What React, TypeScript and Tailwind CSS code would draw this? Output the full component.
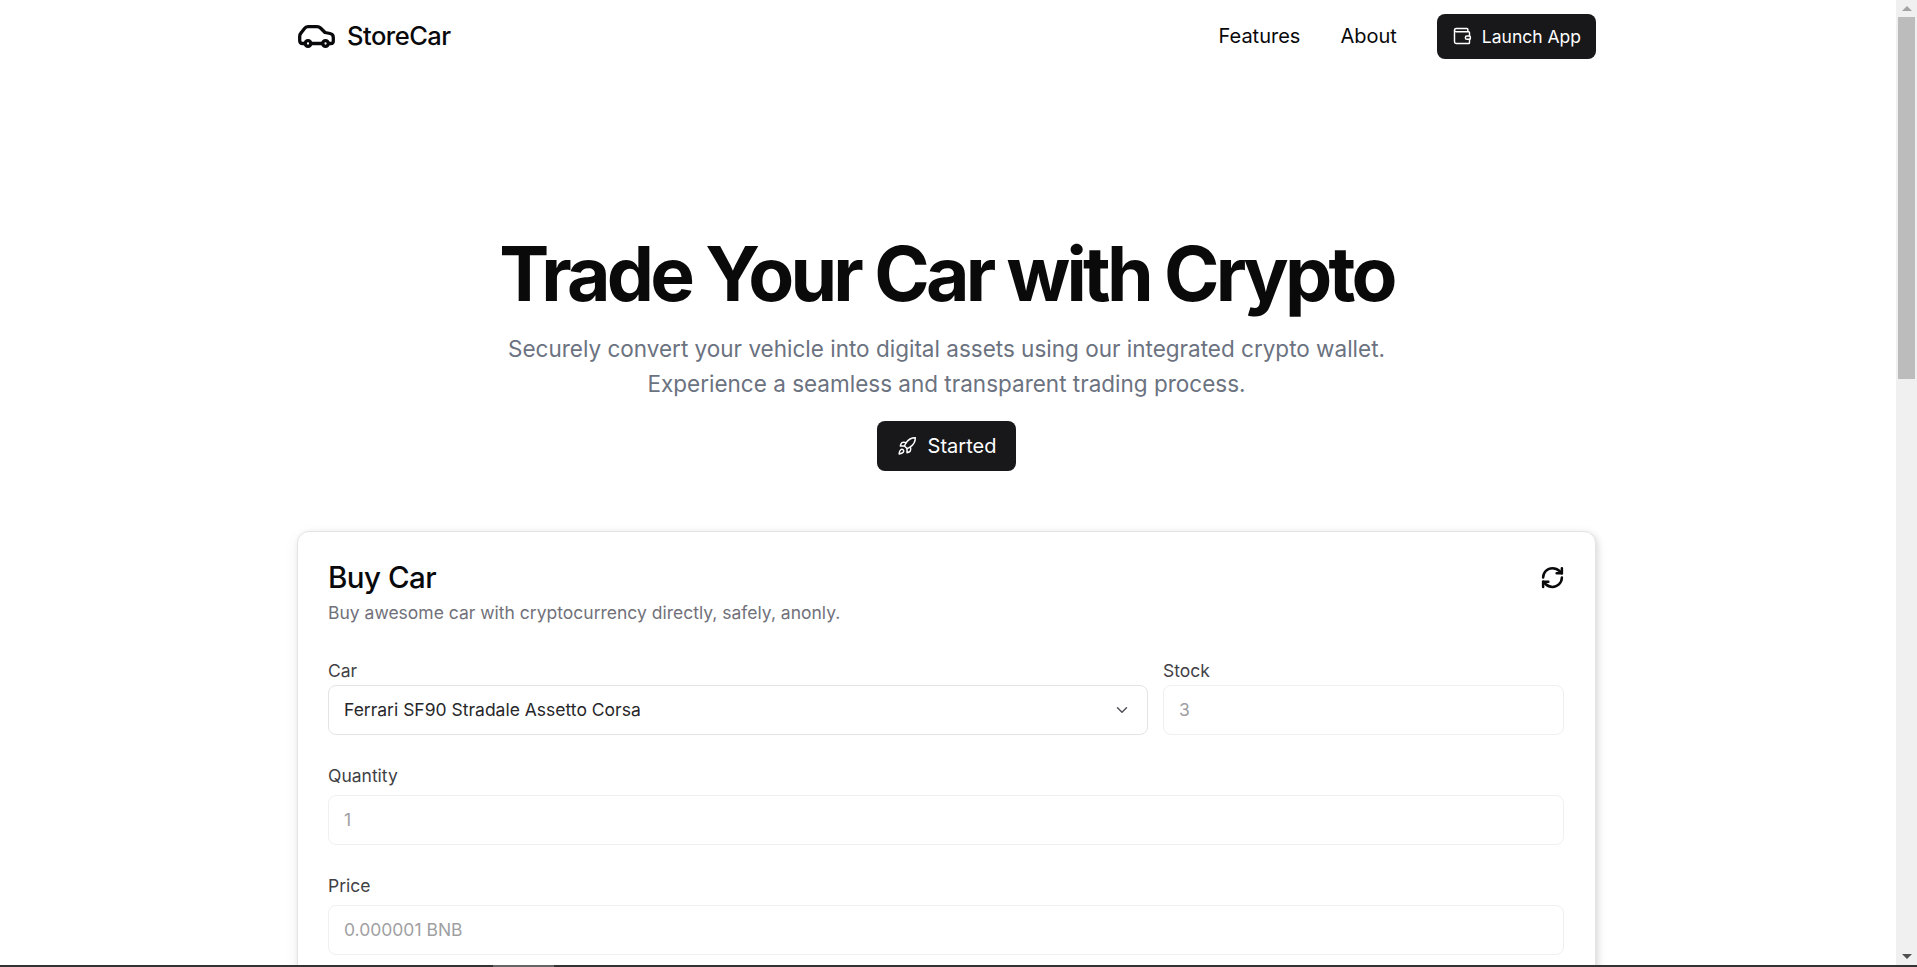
import { ChevronDown, RefreshCw, Rocket, Wallet } from 'lucide-react';

function CarLogo() {
  return (
    <svg width="37" height="23" viewBox="0 0 37 23" fill="none" stroke="currentColor" strokeWidth="3.3" strokeLinecap="round" strokeLinejoin="round" className="ml-[1px]">
      <path d="M6.500 18.500H4.500C2.800 18.500 1.700 17.500 1.700 15.500V11.500C1.700 10 2 9 3 8L6.500 3.500C7.500 2 8.500 1.700 10 1.700H19C20.500 1.700 21.500 2 22.500 3L27 7.500L32 8.500C34.500 9 35.300 10.500 35.300 12.500V16C35.300 17.500 34.500 18.500 33 18.500H31" />
      <path d="M13 18.500H24.500" />
      <circle cx="10" cy="18.500" r="2.800" />
      <circle cx="27.500" cy="18.500" r="2.800" />
    </svg>
  );
}

function Field(props: { label: string; value: string; className?: string; select?: boolean; tight?: boolean }) {
  return (
    <div className={`flex flex-col ${props.className ?? ''}`}>
      <label className={`text-[17.5px] leading-[21px] text-[#3f3f46] ${props.tight ? 'mb-[4px]' : 'mb-[9px]'}`}>{props.label}</label>
      <div className={`flex items-center justify-between h-[50px] pl-[15px] pr-4 rounded-[8px] border bg-white text-[17.5px] ${props.select ? 'border-[#e4e4e7] text-[#27272a]' : 'border-[#f0f0f2] text-[#9f9fa3]'}`}>
        <span>{props.value}</span>
        {props.select && <ChevronDown size={18} className="text-[#52525b]" />}
      </div>
    </div>
  );
}

function Scrollbar() {
  return (
    <div className="flex flex-col items-center w-[21px] shrink-0 bg-[#f0f0f0]">
      <div className="flex items-center justify-center h-[17px] w-full">
        <div className="w-0 h-0 border-x-[5px] border-x-transparent border-b-[5px] border-b-[#a3a3a3]" />
      </div>
      <div className="w-[17px] h-[362px] bg-[#bcbcbc]" />
      <div className="flex-1" />
      <div className="flex items-center justify-center h-[17px] w-full">
        <div className="w-0 h-0 border-x-[5px] border-x-transparent border-t-[5px] border-t-[#505050]" />
      </div>
    </div>
  );
}

export default function App() {
  return (
    <div className="flex flex-col h-[967px] overflow-hidden bg-white font-['Inter',sans-serif] text-[#09090b]">
      <div className="flex flex-1 min-h-0">
        <main className="flex-1 min-w-0 overflow-hidden pr-[3px]">
          <div className="w-[1299px] mx-auto">
            <header className="flex items-center justify-between h-[72px]">
              <div className="flex items-center gap-[12px]">
                <CarLogo />
                <span className="text-[25.5px] font-medium tracking-[-0.5px]">StoreCar</span>
              </div>
              <nav className="flex items-center gap-[40px] text-[20px]">
                <a>Features</a>
                <a>About</a>
                <button className="flex items-center gap-[10px] h-[45px] pt-[2px] pl-[15px] pr-[15px] rounded-[8px] bg-[#18181b] text-white text-[17.5px]">
                  <Wallet size={20} strokeWidth={1.75} className="-mt-[2px]" />
                  Launch App
                </button>
              </nav>
            </header>

            <section className="flex flex-col items-center pt-[164px]">
              <h1 className="text-[75px] leading-[75px] font-bold tracking-[-3.75px] text-[#0a0a0a]">Trade Your Car with Crypto</h1>
              <p className="mt-[20px] text-[22.5px] leading-[35px] text-[#6b7280] text-center">
                Securely convert your vehicle into digital assets using our integrated crypto wallet.
                <br />
                Experience a seamless and transparent trading process.
              </p>
              <button className="flex items-center gap-[11px] h-[50px] pl-5 pr-5 mt-[20px] rounded-[8px] bg-[#18181b] text-white text-[20px]">
                <Rocket size={20} strokeWidth={1.75} />
                Started
              </button>
            </section>

            <section className="mt-[60px] rounded-[12px] border border-[#e4e4e7] bg-white shadow-[2px_2px_6px_rgba(0,0,0,0.12),0_4px_16px_rgba(0,0,0,0.05)] pl-[30px] pr-[31px] pt-[27px] pb-[40px]">
              <div className="flex items-start justify-between">
                <div>
                  <h2 className="text-[29.5px] leading-[36px] font-[550] tracking-[-0.5px]">Buy Car</h2>
                  <p className="mt-[6px] text-[17.5px] leading-[24px] text-[#71717a]">Buy awesome car with cryptocurrency directly, safely, anonly.</p>
                </div>
                <RefreshCw size={25} strokeWidth={2.4} className="mt-[6px] -mr-[1px]" />
              </div>

              <div className="flex gap-[15px] mt-[35px]">
                <Field className="flex-1" label="Car" value="Ferrari SF90 Stradale Assetto Corsa" select tight />
                <Field className="w-[401px]" label="Stock" value="3" tight />
              </div>
              <Field className="mt-[30px]" label="Quantity" value="1" />
              <Field className="mt-[30px]" label="Price" value="0.000001 BNB" />
            </section>
          </div>
        </main>
        <Scrollbar />
      </div>
      <div className="flex h-[2px] shrink-0 bg-[#333333]">
        <div className="ml-[493px] w-[61px] bg-[#666666]" />
      </div>
    </div>
  );
}
